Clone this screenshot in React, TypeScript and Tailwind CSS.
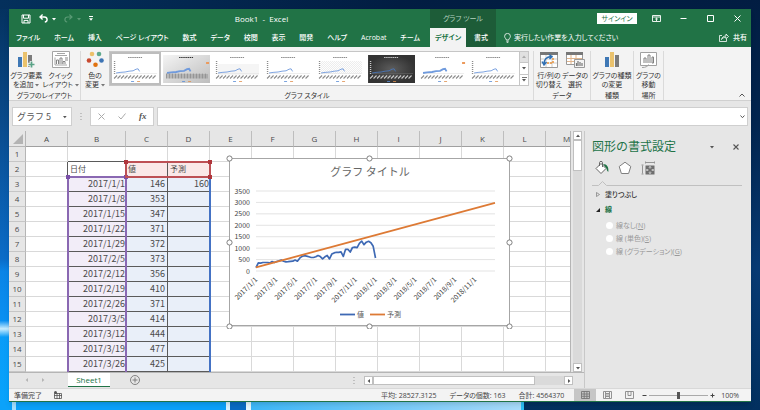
import { useState } from 'react'
import type { ReactNode } from 'react'

const TABS = ['ファイル', 'ホーム', '挿入', 'ページ レイアウト', '数式', 'データ', '校閲', '表示', '開発', 'ヘルプ', 'Acrobat', 'チーム']

const COLUMNS = ['A', 'B', 'C', 'D', 'E', 'F', 'G', 'H', 'I', 'J', 'K', 'L', 'M']

const RECORDS: [string, number][] = [
  ['2017/1/1', 146],
  ['2017/1/8', 353],
  ['2017/1/15', 347],
  ['2017/1/22', 371],
  ['2017/1/29', 372],
  ['2017/2/5', 373],
  ['2017/2/12', 356],
  ['2017/2/19', 410],
  ['2017/2/26', 371],
  ['2017/3/5', 414],
  ['2017/3/12', 444],
  ['2017/3/19', 477],
  ['2017/3/26', 425],
]

// weekly values for the whole year, used by the chart
const SERIES = [
  146, 353, 347, 371, 372, 373, 356, 410, 371, 414, 444, 477, 425, 400, 405, 420, 430, 475, 430, 560, 640, 670, 650, 620, 590,
  590, 620, 680, 630, 530, 620, 680, 530, 740, 790, 820, 820, 840, 640, 950, 950, 830, 1030, 1040, 1020, 1210, 1310, 1150,
  1260, 1300, 1240, 1080, 570,
]

const MONTHS = ['2017/1/1', '2017/3/1', '2017/5/1', '2017/7/1', '2017/9/1', '2017/11/1', '2018/1/1', '2018/3/1', '2018/5/1', '2018/7/1', '2018/9/1', '2018/11/1']

function Wallpaper() {
  return (
    <svg className="absolute inset-0 w-full h-full" viewBox="0 0 760 410" preserveAspectRatio="none" aria-hidden="true">
      <defs>
        <linearGradient id="wl" x1="0" y1="0" x2="0" y2="1">
          <stop offset="0" stopColor="#04305c" />
          <stop offset="0.3" stopColor="#0a4b8c" />
          <stop offset="0.63" stopColor="#0b6cc8" />
          <stop offset="0.66" stopColor="#0a84e6" />
          <stop offset="0.78" stopColor="#0a90f2" />
          <stop offset="0.8" stopColor="#c9edff" />
          <stop offset="0.82" stopColor="#0a9cf8" />
          <stop offset="1" stopColor="#07a4fc" />
        </linearGradient>
        <linearGradient id="wt" x1="0" y1="0" x2="1" y2="0">
          <stop offset="0" stopColor="#04305c" />
          <stop offset="1" stopColor="#021d42" />
        </linearGradient>
        <linearGradient id="wr" x1="0" y1="0" x2="0" y2="1">
          <stop offset="0" stopColor="#021d42" />
          <stop offset="0.3" stopColor="#02254f" />
          <stop offset="0.65" stopColor="#073a73" />
          <stop offset="1" stopColor="#02305f" />
        </linearGradient>
        <linearGradient id="wb" x1="0" y1="0" x2="1" y2="0">
          <stop offset="0" stopColor="#3db8f8" />
          <stop offset="1" stopColor="#a9dcfb" />
        </linearGradient>
      </defs>
      <rect width="760" height="410" fill="url(#wr)" />
      <rect width="120" height="410" fill="url(#wl)" />
      <rect width="400" height="9" fill="url(#wt)" />
      <rect y="399" width="230" height="11" fill="#0ba2fa" />
      <rect x="12" y="401" width="4" height="9" fill="#a5e0ff" />
      <rect x="226" y="401" width="4" height="9" fill="#d9f3ff" />
      <rect x="230" y="399" width="16" height="11" fill="#0a6cc4" />
      <rect x="246" y="401" width="5" height="9" fill="#e8f8ff" />
      <rect x="251" y="399" width="270" height="11" fill="url(#wb)" />
      <rect x="521" y="399" width="3" height="11" fill="#2cc0f5" />
    </svg>
  )
}

function Caret({ className = '' }: { className?: string }) {
  return (
    <svg className={`inline-block w-1 h-1 ${className}`} viewBox="0 0 4 4" fill="currentColor">
      <path d="M0 1h4L2 3.4z" />
    </svg>
  )
}

function TitleBar() {
  return (
    <div className="flex h-[19px] items-center text-white">
      <div className="flex w-[421px] shrink-0 items-center">
        <div className="flex w-20 items-center pl-3">
          <button aria-label="上書き保存" className="w-[10px]">
            <svg className="w-[10px] h-[10px]" viewBox="0 0 10 10" fill="none" stroke="currentColor">
              <path d="M1 1h8v8H1zM2.5 1v3.2h5V1M3 9V6.4h4V9" />
            </svg>
          </button>
          <button aria-label="元に戻す" className="ml-2 flex items-center gap-1">
            <svg className="w-[9px] h-[9px]" viewBox="0 0 9 9" fill="none" stroke="currentColor" strokeWidth="1.4">
              <path d="M3.6.6L1 3l2.6 2.4M1 3h4.4c3.4 0 3.6 4.6.4 5" />
            </svg>
            <Caret />
          </button>
          <button aria-label="やり直し" className="ml-2 flex items-center gap-1 text-[#5a9a75]">
            <svg className="w-[9px] h-[9px]" viewBox="0 0 9 9" fill="none" stroke="currentColor" strokeWidth="1.2">
              <path d="M5.4.6L8 3 5.4 5.4M8 3H3.6C.2 3 0 7.6 3.2 8" />
            </svg>
            <Caret />
          </button>
        </div>
        <button aria-label="クイック アクセス ツール バーのユーザー設定" className="w-1 shrink-0">
          <svg className="w-1 h-[5px]" viewBox="0 0 4 5" fill="currentColor">
            <path d="M0 0h4v1H0zM0 2.2h4L2 4.8z" />
          </svg>
        </button>
        <span className="flex-1 text-center text-[8px]">Book1&nbsp; -&nbsp; Excel</span>
      </div>
      <div className="flex h-full w-[66px] shrink-0 items-center justify-center bg-[#1d5c38] text-[#b5d3c0]">グラフ ツール</div>
      <button className="ml-auto mr-[6px] h-[11px] w-10 bg-white text-[#217346]">サインイン</button>
      <button aria-label="リボンの表示オプション" className="flex w-[27px] justify-center">
        <svg className="w-[9px] h-[7px]" viewBox="0 0 9 7" fill="none" stroke="currentColor" strokeWidth="0.9">
          <path d="M.5.5h8v6h-8zM.5 2h8M4.5 6V3.2M3.2 4.3l1.3-1.2 1.3 1.2" />
        </svg>
      </button>
      <button aria-label="最小化" className="flex w-[27px] justify-center">
        <svg className="w-[7px] h-[7px]" viewBox="0 0 7 7" stroke="currentColor"><path d="M.5 3.5h6" /></svg>
      </button>
      <button aria-label="最大化" className="flex w-[27px] justify-center">
        <svg className="w-[7px] h-[7px]" viewBox="0 0 7 7" fill="none" stroke="currentColor"><path d="M.5.5h6v6h-6z" /></svg>
      </button>
      <button aria-label="閉じる" className="flex w-[27px] justify-center">
        <svg className="w-[7px] h-[7px]" viewBox="0 0 7 7" stroke="currentColor"><path d="M.5.5l6 6M6.5.5l-6 6" /></svg>
      </button>
    </div>
  )
}

function TabRow() {
  return (
    <div className="flex h-[19px] items-center font-medium text-white">
      <nav className="flex w-[421px] shrink-0 justify-between pl-[7px] pr-[10px]">
        {TABS.map((t) => (
          <button key={t} className="whitespace-nowrap">{t}</button>
        ))}
      </nav>
      <button className="h-full w-9 shrink-0 whitespace-nowrap bg-[#f3f3f3] font-bold text-[#217346]">デザイン</button>
      <button className="h-full w-[30px] shrink-0 bg-[#1d5c38]">書式</button>
      <button className="ml-2 flex items-center gap-[3px] whitespace-nowrap font-normal">
        <svg className="w-[7px] h-[10px]" viewBox="0 0 7 10" fill="none" stroke="currentColor" strokeWidth="0.8">
          <path d="M2.3 7C2.3 5.6.6 5 .6 3.3a2.9 2.9 0 015.8 0C6.4 5 4.7 5.6 4.7 7zM2.3 8.2h2.4M2.7 9.4h1.6" />
        </svg>
        実行したい作業を入力してください
      </button>
      <button className="ml-auto mr-1 flex items-center gap-1">
        <svg className="w-[10px] h-[9px]" viewBox="0 0 10 9" fill="none" stroke="currentColor" strokeWidth="0.8">
          <path d="M3 2.5H.5v6h7V6M2.5 6.5C3 4 5 3 7 3V1l2.5 2.5L7 5.800V4.2C5.5 4.2 3.5 4.8 2.5 6.5z" />
        </svg>
        共有
      </button>
    </div>
  )
}

function Bars() {
  return (
    <>
      <path d="M1 6h4v10H1z" fill="#3f78b5" />
      <path d="M6 1h4v15H6z" fill="#eac26d" />
      <path d="M11 4h4v12h-4z" fill="#7b7b7b" />
    </>
  )
}

function RibbonButton({ icon, lines, caret }: { icon: ReactNode; lines: [string, string]; caret?: boolean }) {
  return (
    <button className="flex flex-col items-center whitespace-nowrap">
      <svg className="w-5 h-[17px] mb-[3px]" viewBox="0 0 20 17" fill="none">{icon}</svg>
      <span>{lines[0]}</span>
      <span className="flex items-center gap-[2px]">
        {lines[1]}
        {caret && <Caret className="text-[#777]" />}
      </span>
    </button>
  )
}

function Group({ label, className, children }: { label: string; className: string; children: ReactNode }) {
  return (
    <section className={`flex flex-col border-r border-[#dadada] ${className}`}>
      <div className="flex h-[39px] justify-center">{children}</div>
      <h2 className="mt-px text-center">{label}</h2>
    </section>
  )
}

function StyleThumb({ variant }: { variant: number }) {
  const dark = variant === 5
  const ink = dark ? '#c9c9c9' : '#8c8c8c'
  return (
    <svg className="w-full h-7" viewBox="0 0 47 28" fill="none">
      <defs>
        <linearGradient id="thumbGrey" x1="0" y1="0" x2="1" y2="1">
          <stop offset="0" stopColor="#f4f4f4" />
          <stop offset="1" stopColor="#bdbdbd" />
        </linearGradient>
        <radialGradient id="thumbDark">
          <stop offset="0" stopColor="#5c5c5c" />
          <stop offset="1" stopColor="#333" />
        </radialGradient>
        <pattern id="thumbHatch" width="2" height="2" patternUnits="userSpaceOnUse">
          <path d="M0 2L2 0" stroke="#d9d9d9" strokeWidth="0.5" />
        </pattern>
      </defs>
      <rect width="47" height="28" fill={dark ? 'url(#thumbDark)' : variant === 1 ? 'url(#thumbGrey)' : '#fff'} />
      {variant === 4 && <rect x="4" y="6" width="41" height="13" fill="url(#thumbHatch)" />}
      {variant === 2 && <rect x="4" y="9" width="41" height="11" fill="#f5f5f5" />}
      <path d="M16 2.5h14" stroke={variant === 1 ? '#333' : ink} strokeWidth="1.2" strokeDasharray="1.5 .6" />
      {variant !== 6 && variant !== 1 && <path d="M2.5 6v13" stroke={ink} strokeWidth="1.4" strokeDasharray="1 1" />}
      <path d="M4 18.5h41" stroke={dark ? '#666' : '#e2e2e2'} strokeWidth="0.6" />
      <path
        d="M4 18l4-.6 5-.4 4-.8 4-.4 3-1.6 2-.4 1.5 2.6"
        stroke={dark ? '#4a76b8' : '#6f9add'}
        strokeWidth={variant === 1 || variant === 6 ? 1.8 : 0.9}
      />
      {variant === 1 ? (
        <path d="M3 21h42" stroke="#8f8f8f" strokeWidth="5" strokeDasharray=".9 .6" />
      ) : (
        <path
          d="M2 23.5l3-3M5.5 23.5l3-3M9 23.5l3-3M12.5 23.5l3-3M16 23.5l3-3M19.5 23.5l3-3M23 23.5l3-3M26.5 23.5l3-3M30 23.5l3-3M33.5 23.5l3-3M37 23.5l3-3M40.5 23.5l3-3"
          stroke={ink}
          strokeWidth="1.1"
        />
      )}
      <path d="M19 26.5h3" stroke="#5b8dd6" strokeWidth="0.8" />
      <path d="M25 26.5h3" stroke="#e0904f" strokeWidth="0.8" />
      {(variant === 1 || variant === 6) && <path d="M43 8h3" stroke="#ec9a5c" strokeWidth="2" />}
    </svg>
  )
}

function Ribbon() {
  return (
    <div className="flex h-[54px] border-b border-[#d0d0d0] bg-[#f3f3f3] pt-1 text-[#333]">
      <Group label="グラフのレイアウト" className="w-[72px]">
        <div className="flex flex-1 justify-between px-[3px]">
          <RibbonButton
            lines={['グラフ要素', 'を追加']}
            caret
            icon={
              <>
                <g transform="translate(1 0)"><Bars /></g>
                <path d="M15.5 10v7M12 13.5h7" stroke="#f3f3f3" strokeWidth="3.5" />
                <path d="M15.5 10.5v6M12.5 13.5h6" stroke="#5aa387" strokeWidth="1.7" />
              </>
            }
          />
          <RibbonButton
            lines={['クイック', 'レイアウト']}
            caret
            icon={
              <g stroke="#a5a5a5">
                <path d="M1.5.5h17v16h-17z" fill="#fff" />
                <path d="M6 2.5h8M4 4.5h12M4 6.5v7.5h12" />
                <path d="M5.5 13V9h2v4M9 13V7h2v6M12 13v-2.5h2V13M14 7h3M14 9h3" stroke="#858585" />
              </g>
            }
          />
        </div>
      </Group>
      <section className="flex min-w-0 flex-1 flex-col border-r border-[#dadada]">
        <div className="flex h-[39px]">
          <div className="flex w-7 shrink-0 justify-center">
            <RibbonButton
              lines={['色の', '変更']}
              caret
              icon={
                <g transform="translate(1 0)">
                  <circle cx="6" cy="3" r="2.3" fill="#ecc06a" />
                  <circle cx="13" cy="3" r="2.3" fill="#5fa98d" />
                  <circle cx="3" cy="9.5" r="2.3" fill="#c84a30" />
                  <circle cx="15.5" cy="9.5" r="2.3" fill="#3d74b4" />
                  <circle cx="9.5" cy="13.8" r="2.3" fill="#e0720f" />
                </g>
              }
            />
          </div>
          <div className="mr-1 flex h-[35px] min-w-0 flex-1 border border-[#c6c6c6] bg-white">
            <div className="flex min-w-0 flex-1">
              {[0, 1, 2, 3, 4, 5, 6, 7].map((v) => (
                <button
                  key={v}
                  aria-label={`スタイル ${v + 1}`}
                  className={v === 0 ? 'min-w-0 flex-1 border-2 border-[#bdbdbd]' : 'min-w-0 flex-1 border-2 border-transparent'}
                >
                  <StyleThumb variant={v} />
                </button>
              ))}
            </div>
            <div className="flex w-[9px] shrink-0 flex-col border-l border-[#c6c6c6] text-[#555]">
              <button aria-label="前の行" className="flex flex-1 items-center justify-center bg-[#e1e1e1] text-[#aaa]"><Caret className="rotate-180" /></button>
              <button aria-label="次の行" className="flex flex-1 items-center justify-center border-y border-[#c6c6c6]"><Caret /></button>
              <button aria-label="その他" className="flex flex-1 flex-col items-center justify-center">
                <span className="h-px w-[5px] bg-[#777]" />
                <Caret />
              </button>
            </div>
          </div>
        </div>
        <h2 className="mt-px text-center">グラフ スタイル</h2>
      </section>
      <Group label="データ" className="w-[57px]">
        <div className="flex flex-1 justify-between px-[2px]">
          <RibbonButton
            lines={['行/列の', '切り替え']}
            icon={
              <>
                <path d="M1.5 1.5h17v15h-17z" fill="#fff" stroke="#999" />
                <path d="M1 1h18v3H1z" fill="#777" />
                <path d="M2 8h16M2 12h16M7 4v12M13 4v12" stroke="#ccc" />
                <path d="M8 12h6V6" stroke="#e8923c" strokeWidth="1.5" strokeDasharray="2 1" />
                <path d="M5 13c0-5 3-7 7-7.5M10 3.5l3 2-2.5 2.5M3 10.5L5 14l2.5-3" stroke="#2f6fb3" strokeWidth="1.4" />
              </>
            }
          />
          <RibbonButton
            lines={['データの', '選択']}
            icon={
              <>
                <path d="M1.5 1.5h16v12h-16z" fill="#fff" stroke="#999" />
                <path d="M1 1h17v3H1z" fill="#777" />
                <path d="M2 7.5h15M2 10.5h15M6 4v9M11 4v9" stroke="#e0b48c" />
                <path d="M9.5 8.5h10v8h-10z" fill="#f3f3f3" stroke="#999" />
                <path d="M11.5 15v-3M13 15v-5M15 15v-4M17 15v-3" stroke="#777" strokeWidth="1.2" />
              </>
            }
          />
        </div>
      </Group>
      <Group label="種類" className="w-[43px]">
        <RibbonButton lines={['グラフの種類', 'の変更']} icon={<g transform="translate(2 0)"><Bars /></g>} />
      </Group>
      <Group label="場所" className="w-[30px]">
        <RibbonButton
          lines={['グラフの', '移動']}
          icon={
            <g stroke="#a0a0a0">
              <path d="M2.5 1.5h16v13h-16z" fill="#fff" />
              <path d="M6 12V7h2v5M10 12V4h2v8M14 12V6h1.5v6z" stroke="#808080" />
              <path d="M4 16.5c4 0 5-1 7-3" fill="none" />
            </g>
          }
        />
      </Group>
      <div className="flex w-[87px] items-end justify-end pb-[3px] pr-[6px]">
        <button aria-label="リボンを折りたたむ">
          <svg className="w-[6px] h-1" viewBox="0 0 6 4" fill="none" stroke="#555"><path d="M.5 3.5L3 1l2.5 2.5" /></svg>
        </button>
      </div>
    </div>
  )
}

function FormulaBar() {
  return (
    <div className="flex h-[30px] items-center gap-[3px] bg-[#e6e6e6] px-[3px] pb-1 pt-[5px] text-[#555]">
      <div className="flex h-[19px] w-[60px] shrink-0 items-center border border-[#cfcfcf] bg-white pr-1">
        <input
          aria-label="名前ボックス"
          defaultValue="グラフ 5"
          className="w-full min-w-0 bg-transparent pl-1 font-['Noto_Sans_CJK_JP',sans-serif] text-[9px] outline-none [font-feature-settings:normal]"
        />
        <Caret />
      </div>
      <div className="flex w-3 shrink-0 justify-center">
        <svg className="w-[2px] h-2" viewBox="0 0 2 8" stroke="#999"><path d="M1 0v8" strokeDasharray="1 2" /></svg>
      </div>
      <div className="flex h-[19px] w-16 shrink-0 items-center justify-around border border-[#cfcfcf] bg-white">
        <svg className="w-[7px] h-[7px]" viewBox="0 0 7 7" stroke="#aaa"><path d="M.5.5l6 6M6.5.5l-6 6" /></svg>
        <svg className="w-2 h-[7px]" viewBox="0 0 8 7" fill="none" stroke="#aaa"><path d="M.5 3.5L3 6l4.5-5.5" /></svg>
        <button aria-label="関数の挿入" className="font-['Liberation_Serif',serif] text-[9px] font-bold italic">fx</button>
      </div>
      <div className="flex h-[19px] min-w-0 flex-1 items-center border border-[#cfcfcf] bg-white pr-[2px]">
        <input aria-label="数式バー" className="w-full min-w-0 bg-transparent outline-none" />
        <svg className="w-[5px] h-1" viewBox="0 0 5 4" fill="none" stroke="#555"><path d="M.5.5l2 2.2 2-2.2" /></svg>
      </div>
    </div>
  )
}

function Chart() {
  const x = (week: number) => 30 + (week * 239) / 104
  const y = (value: number) => 116 - (value * 80) / 3500
  const points = SERIES.map((v, i) => `${x(i).toFixed(1)},${y(v).toFixed(1)}`).join(' ')
  const handles = [
    [3, 3], [143, 3], [283, 3],
    [3, 87], [283, 87],
    [3, 171], [143, 171], [283, 171],
  ]
  return (
    <svg
      className="absolute left-[217px] top-6 w-[287px] h-[174px] font-['Noto_Sans_CJK_JP',sans-serif] [font-feature-settings:normal]"
      viewBox="0 0 287 174"
      role="img"
      aria-label="グラフ タイトル"
    >
      <rect x="3.5" y="3.5" width="280" height="167" fill="#fff" stroke="#a6a6a6" />
      <text x="144" y="21" textAnchor="middle" fontSize="11" fill="#666">グラフ タイトル</text>
      {[0, 500, 1000, 1500, 2000, 2500, 3000, 3500].map((v) => (
        <g key={v}>
          <path d={`M30 ${y(v)}h239`} stroke="#dcdcdc" strokeWidth="0.8" />
          <text x="24" y={y(v) + 2.5} textAnchor="end" fontSize="7" fill="#444">{v}</text>
        </g>
      ))}
      {MONTHS.map((m, i) => (
        <text key={m} transform={`translate(${32 + i * 19.9} 125) rotate(-45)`} textAnchor="end" fontSize="7" fill="#333">{m}</text>
      ))}
      <polyline points={points} fill="none" stroke="#3e69b4" strokeWidth="1.7" strokeLinejoin="round" />
      <path d={`M30 ${y(160)}L269 ${y(2980)}`} stroke="#dd7a35" strokeWidth="1.8" />
      <path d="M114 159.5h15" stroke="#3e69b4" strokeWidth="1.8" />
      <text x="131" y="162" fontSize="7" fill="#555">値</text>
      <path d="M144 159.5h15" stroke="#dd7a35" strokeWidth="1.8" />
      <text x="161" y="162" fontSize="7" fill="#555">予測</text>
      {handles.map(([cx, cy]) => (
        <circle key={`${cx}-${cy}`} cx={cx + 0.5} cy={cy + 0.5} r="2.6" fill="#fff" stroke="#808080" />
      ))}
    </svg>
  )
}

const plainCell = 'border-b border-r border-[#d9d9d9]'
const boxedCell = 'border-b border-r border-[#5a5a5a]'

function Sheet() {
  return (
    <div className="relative min-w-0 flex-1 overflow-hidden border-r border-[#b5b5b5] bg-white">
      <table className="w-[579px] table-fixed border-separate border-spacing-0 font-['Noto_Sans_CJK_JP',sans-serif] text-[9px] leading-[14px] text-[#4a4a4a] [font-feature-settings:normal]">
        <colgroup>
          <col className="w-[17px]" />
          {COLUMNS.map((c) => (
            <col key={c} className={c === 'B' ? 'w-[58px]' : 'w-[42px]'} />
          ))}
        </colgroup>
        <thead>
          <tr className="h-4 bg-[#e6e6e6]">
            <th className="border-b border-r border-[#b5b5b5] p-0">
              <svg className="ml-auto mr-[2px] w-[10px] h-[10px]" viewBox="0 0 10 10" fill="#b3b3b3"><path d="M10 0v10H0z" /></svg>
            </th>
            {COLUMNS.map((c) => (
              <th key={c} className="border-b border-r border-b-[#a0a0a0] border-r-[#bdbdbd] p-0 font-['Open_Sans',sans-serif] text-[8px] font-normal">{c}</th>
            ))}
          </tr>
        </thead>
        <tbody>
          {Array.from({ length: 15 }, (_, i) => {
            const record = RECORDS[i - 2]
            return (
              <tr key={i} className="h-[15px]">
                <th className="border-b border-r border-b-[#c6c6c6] border-r-[#b5b5b5] bg-[#e6e6e6] p-0 font-['Open_Sans',sans-serif] text-[8px] font-normal">{i + 1}</th>
                <td className={i === 0 ? plainCell : 'border-b border-r border-b-[#d9d9d9] border-r-[#5a5a5a]'} />
                {i === 0 && (
                  <>
                    <td className="border-b border-r border-b-[#5a5a5a] border-r-[#d9d9d9]" />
                    <td className={plainCell} />
                    <td className={plainCell} />
                  </>
                )}
                {i === 1 && (
                  <>
                    <td className={`${boxedCell} p-0 pl-[2px] text-[8px]`}>日付</td>
                    <td className={`${boxedCell} bg-[#fae8e8] p-0 pl-[2px] text-[8px]`}>値</td>
                    <td className={`${boxedCell} bg-[#fae8e8] p-0 pl-[2px] text-[8px]`}>予測</td>
                  </>
                )}
                {record && (
                  <>
                    <td className={`${boxedCell} bg-[#f2edf8] p-0 text-right`}>{record[0]}</td>
                    <td className={`${boxedCell} bg-[#e9eff9] p-0 pr-[2px] text-right`}>{record[1]}</td>
                    <td className={`${boxedCell} bg-[#e9eff9] p-0 text-right`}>{i === 2 ? 160 : ''}</td>
                  </>
                )}
                {COLUMNS.slice(4).map((c) => (
                  <td key={c} className={plainCell} />
                ))}
              </tr>
            )
          })}
        </tbody>
      </table>

      {/* source ranges of the selected chart */}
      <div className="absolute left-[117px] top-[46px] bottom-0 w-[85px] border-r-2 border-[#4472c4]" />
      <div className="absolute left-[58px] top-[45px] bottom-0 w-[60px] border-x-2 border-t-2 border-[#8a68b2]">
        <i className="absolute -left-[3px] -top-[3px] h-1 w-1 bg-[#7a4fa8]" />
        <i className="absolute -right-[3px] -top-[3px] h-1 w-1 bg-[#7a4fa8]" />
      </div>
      <div className="absolute left-[116px] top-[30px] h-[17px] w-[86px] border-2 border-[#bd5055]">
        <i className="absolute -left-[3px] -top-[3px] h-1 w-1 bg-[#b0363c]" />
        <i className="absolute -right-[3px] -top-[3px] h-1 w-1 bg-[#b0363c]" />
        <i className="absolute -bottom-[3px] -right-[3px] h-1 w-1 bg-[#b0363c]" />
      </div>
      <Chart />
    </div>
  )
}

const scrollButton = 'flex h-[9px] w-[9px] shrink-0 items-center justify-center border border-[#c0c0c0] bg-white text-[#555]'

function SheetTabs() {
  return (
    <div className="flex h-4 items-start border-t border-[#b5b5b5]">
      <div className="flex h-[14px] w-[59px] shrink-0 items-center gap-3 pl-4 text-[#b5b5b5]">
        <Caret className="rotate-90" />
        <Caret className="-rotate-90" />
      </div>
      <button className="h-[14px] w-[42px] shrink-0 border-b border-[#217346] bg-white text-[8px] font-medium leading-3 text-[#217346]">Sheet1</button>
      <button aria-label="新しいシート" className="ml-5 mt-[2px]">
        <svg className="w-[10px] h-[10px]" viewBox="0 0 10 10" fill="none" stroke="#777" strokeWidth="0.9">
          <circle cx="5" cy="5" r="4.5" />
          <path d="M5 2.5v5M2.5 5h5" />
        </svg>
      </button>
      <div className="ml-auto mr-[11px] flex w-[220px] items-center pt-[3px]">
        <svg className="mr-[9px] w-[2px] h-[7px]" viewBox="0 0 2 7" stroke="#999"><path d="M1 0v7" strokeDasharray="1 2" /></svg>
        <button aria-label="左へ" className={scrollButton}><Caret className="rotate-90" /></button>
        <div className="h-[9px] flex-1 bg-[#dadada]">
          <div className="h-full w-[85%] border border-[#c0c0c0] bg-white" />
        </div>
        <button aria-label="右へ" className={scrollButton}><Caret className="-rotate-90" /></button>
      </div>
    </div>
  )
}

function FormatPane() {
  const [line, setLine] = useState('')
  const options = [
    { key: 'N', label: '線なし' },
    { key: 'S', label: '線 (単色)' },
    { key: 'G', label: '線 (グラデーション)' },
  ]
  return (
    <aside className="w-[167px] shrink-0 border-l border-[#c8c8c8] pl-[7px] pr-[9px] pt-2 text-[#333]">
      <div className="flex h-4 items-center">
        <h1 className="flex-1 text-[12px] leading-4 text-[#217346] [font-feature-settings:normal]">図形の書式設定</h1>
        <Caret className="mr-[19px] text-[#555]" />
        <button aria-label="閉じる" className="mr-[3px]">
          <svg className="w-[6px] h-[6px]" viewBox="0 0 6 6" stroke="#555" strokeWidth="1.1"><path d="M.5.5l5 5M5.5.5l-5 5" /></svg>
        </button>
      </div>
      <div className="mt-[6px] flex gap-[9px] pl-[3px]">
        <button aria-label="塗りつぶしと線">
          <svg className="w-[14px] h-[14px]" viewBox="0 0 14 14" fill="none">
            <path d="M6 2.5l5 5-5 5-5-5z" fill="#fff" stroke="#666" />
            <path d="M4.5 5V1.5c0-1.5 3-1.5 3 0V6" stroke="#666" />
            <path d="M8 3c4 0 6 3 5.3 8-1-1-1.6-2-1.8-3.5z" fill="#217346" />
          </svg>
        </button>
        <button aria-label="効果">
          <svg className="w-[14px] h-[14px]" viewBox="0 0 14 14"><path d="M7 1.2l5.8 4.3-2.2 7H3.4l-2.2-7z" fill="#fff" stroke="#808080" /></svg>
        </button>
        <button aria-label="サイズとプロパティ">
          <svg className="w-[14px] h-[14px]" viewBox="0 0 14 14" fill="none" stroke="#808080">
            <path d="M5 1.5h8M4.5 .5v2M13.5 .5v2M1.5 4.5v8M.5 4h2M.5 13h2" strokeWidth="0.8" />
            <path d="M4.500 4.500h9v9h-9z" fill="#6e6e6e" stroke="none" />
            <path d="M9 5.500v2M9 10.500v2M5.500 9h2M10.500 9h2M8 6.500l1-1 1 1M8 11.500l1 1 1-1M6.500 8l-1 1 1 1M11.500 8l1 1-1 1" stroke="#eee" strokeWidth="0.8" />
          </svg>
        </button>
      </div>
      <svg className="mt-[5px] w-full h-[6px]" preserveAspectRatio="xMinYMin slice" viewBox="0 0 150 6" fill="none" stroke="#c0c0c0">
        <path d="M0 5.5h6.5l4-4 4 4H150" />
      </svg>
      <button className="mt-1 flex h-[9px] items-center gap-[5px] pl-[4px] font-medium">
        <svg className="w-1 h-[5px]" viewBox="0 0 4 5" fill="none" stroke="#777" strokeWidth="0.7"><path d="M.5.5l3 2-3 2z" /></svg>
        塗りつぶし
      </button>
      <button className="mt-[6px] flex h-[9px] items-center gap-[5px] pl-[4px] font-bold text-[#217346]">
        <svg className="w-1 h-1" viewBox="0 0 4 4" fill="#222"><path d="M4 0v4H0z" /></svg>
        線
      </button>
      <fieldset className="mt-[7px] flex flex-col gap-[4px] pl-[14px] text-[#999]">
        {options.map((o) => (
          <label key={o.key} className="flex h-[9px] items-center gap-[3px]">
            <input
              type="radio"
              name="line"
              checked={line === o.key}
              onChange={() => setLine(o.key)}
              className="h-[7px] w-[7px] appearance-none rounded-full bg-white checked:border-2 checked:border-[#217346]"
            />
            <span>{o.label}(<u>{o.key}</u>)</span>
          </label>
        ))}
      </fieldset>
    </aside>
  )
}

function StatusBar() {
  return (
    <footer className="flex h-[13px] items-center border-t border-[#d8d8d8] bg-[#f3f3f3] pl-[5px] pr-3 text-[#444]">
      <span>準備完了</span>
      <svg className="ml-3 w-2 h-2" viewBox="0 0 8 8" fill="none" stroke="#555">
        <path d="M.5 2.5h7v5h-7zM0 4.5h8M3 2v6M5.5 2v6" strokeWidth="0.8" />
        <circle cx="1.5" cy="1.5" r="1.5" fill="#555" stroke="none" />
      </svg>
      <div className="ml-auto mr-[10px] flex gap-[13px] whitespace-nowrap">
        <span>平均: 28527.3125</span>
        <span>データの個数: 163</span>
        <span>合計: 4564370</span>
      </div>
      <button aria-label="標準" className="flex h-full w-[22px] items-center justify-center bg-[#c6c6c6]">
        <svg className="w-[9px] h-2" viewBox="0 0 9 8" fill="none" stroke="#777" strokeWidth="0.9"><path d="M.5.5h8v7h-8zM.5 3h8M.5 5.3h8M3.2 0v8M5.9 0v8" /></svg>
      </button>
      <button aria-label="ページ レイアウト" className="flex w-[22px] justify-center">
        <svg className="w-[9px] h-2" viewBox="0 0 9 8" fill="none" stroke="#888" strokeWidth="0.9"><path d="M.5.5h8v7h-8zM2.5 1v6M6.5 1v6M3 2.5h3M3 4h3M3 5.5h3" /></svg>
      </button>
      <button aria-label="改ページ プレビュー" className="flex w-[22px] justify-center">
        <svg className="w-[9px] h-2" viewBox="0 0 9 8" fill="none" stroke="#888" strokeWidth="0.9"><path d="M.5.5h8v7h-8zM3 .5v4M3 4.5h3v-4" /></svg>
      </button>
      <button aria-label="縮小" className="ml-[2px] w-[5px]">
        <svg className="w-[5px] h-[5px]" viewBox="0 0 5 5" stroke="#444"><path d="M.5 2.5h4" /></svg>
      </button>
      <input
        type="range"
        aria-label="ズーム"
        min="10"
        max="190"
        defaultValue="100"
        className="mx-[2px] h-2 w-[59px] appearance-none bg-transparent [&::-webkit-slider-runnable-track]:h-px [&::-webkit-slider-runnable-track]:bg-[#aaa] [&::-webkit-slider-thumb]:-mt-[3px] [&::-webkit-slider-thumb]:h-[7px] [&::-webkit-slider-thumb]:w-[3px] [&::-webkit-slider-thumb]:appearance-none [&::-webkit-slider-thumb]:bg-[#555]"
      />
      <button aria-label="拡大" className="w-[5px]">
        <svg className="w-[5px] h-[5px]" viewBox="0 0 5 5" stroke="#444"><path d="M.5 2.5h4M2.5.5v4" /></svg>
      </button>
      <span className="ml-[6px]">100%</span>
    </footer>
  )
}

export default function App() {
  return (
    <div className="relative flex min-h-screen p-[9px] font-['Open_Sans','Noto_Sans_CJK_JP',sans-serif] text-[7px] leading-[9px] [font-feature-settings:'palt']">
      <Wallpaper />
      <main className="relative flex min-w-0 flex-1 flex-col border-b border-[#217346] bg-[#e6e6e6] shadow-md">
        <header className="bg-[#217346]">
          <TitleBar />
          <TabRow />
        </header>
        <Ribbon />
        <FormulaBar />
        <div className="flex min-h-0 flex-1">
          <div className="flex min-w-0 flex-1 flex-col">
            <div className="flex min-h-0 flex-1">
              <Sheet />
              <div className="ml-[2px] mr-[2px] flex w-[9px] flex-col bg-[#dadada]">
                <button aria-label="上へ" className={scrollButton}><Caret className="rotate-180" /></button>
                <div className="h-[31px] border border-[#c0c0c0] bg-white" />
                <button aria-label="下へ" className={`mt-auto ${scrollButton}`}><Caret /></button>
              </div>
            </div>
            <SheetTabs />
          </div>
          <FormatPane />
        </div>
        <StatusBar />
      </main>
    </div>
  )
}
